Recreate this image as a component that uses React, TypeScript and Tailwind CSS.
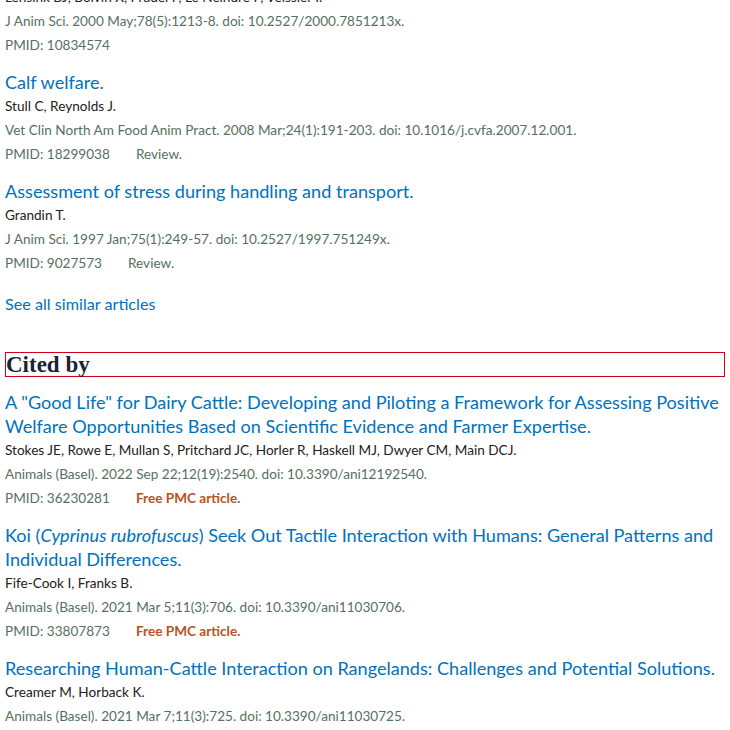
import type { ReactNode } from 'react';

type Article = {
  title: ReactNode;
  authors: string;
  citation: string;
  pmid: string;
  note?: 'review' | 'free';
};

const similar: Article[] = [
  {
    title: 'Calf welfare.',
    authors: 'Stull C, Reynolds J.',
    citation: 'Vet Clin North Am Food Anim Pract. 2008 Mar;24(1):191-203. doi: 10.1016/j.cvfa.2007.12.001.',
    pmid: '18299038',
    note: 'review',
  },
  {
    title: 'Assessment of stress during handling and transport.',
    authors: 'Grandin T.',
    citation: 'J Anim Sci. 1997 Jan;75(1):249-57. doi: 10.2527/1997.751249x.',
    pmid: '9027573',
    note: 'review',
  },
];

const citedBy: Article[] = [
  {
    title:
      'A "Good Life" for Dairy Cattle: Developing and Piloting a Framework for Assessing Positive Welfare Opportunities Based on Scientific Evidence and Farmer Expertise.',
    authors: 'Stokes JE, Rowe E, Mullan S, Pritchard JC, Horler R, Haskell MJ, Dwyer CM, Main DCJ.',
    citation: 'Animals (Basel). 2022 Sep 22;12(19):2540. doi: 10.3390/ani12192540.',
    pmid: '36230281',
    note: 'free',
  },
  {
    title: (
      <>
        Koi (<i>Cyprinus rubrofuscus</i>) Seek Out Tactile Interaction with Humans: General Patterns and Individual
        Differences.
      </>
    ),
    authors: 'Fife-Cook I, Franks B.',
    citation: 'Animals (Basel). 2021 Mar 5;11(3):706. doi: 10.3390/ani11030706.',
    pmid: '33807873',
    note: 'free',
  },
  {
    title: 'Researching Human-Cattle Interaction on Rangelands: Challenges and Potential Solutions.',
    authors: 'Creamer M, Horback K.',
    citation: 'Animals (Basel). 2021 Mar 7;11(3):725. doi: 10.3390/ani11030725.',
    pmid: '',
  },
];

function Docsum({ a }: { a: Article }) {
  return (
    <div className="mb-[13px]">
      <a href="#" className="block text-[18.1px] leading-[24px] text-[#0071bc]">
        {a.title}
      </a>
      <div className="text-[13.6px] leading-[24px] text-[#212121]">{a.authors}</div>
      <div className="text-[13.6px] leading-[24px] text-[#56705f]">{a.citation}</div>
      {a.pmid && (
        <div className="flex text-[13.6px] leading-[24px] text-[#56705f]">
          <span>PMID: {a.pmid}</span>
          {a.note === 'review' && <span className="ml-[26px]">Review.</span>}
          {a.note === 'free' && <span className="ml-[26px] font-bold text-[#b9531c]">Free PMC article.</span>}
        </div>
      )}
    </div>
  );
}

export default function App() {
  return (
    <div className="w-[730px] h-[730px] overflow-hidden bg-white px-[5px] font-['Lato',sans-serif]">
      <div className="-mt-[15px]">
        <div className="text-[13.6px] leading-[24px] text-[#212121]">
          Lensink BJ, Boivin X, Pradel P, Le Neindre P, Veissier I.
        </div>
        <div className="text-[13.6px] leading-[24px] text-[#56705f]">
          J Anim Sci. 2000 May;78(5):1213-8. doi: 10.2527/2000.7851213x.
        </div>
        <div className="text-[13.6px] leading-[24px] text-[#56705f] mb-[13px]">PMID: 10834574</div>

        {similar.map((a, i) => (
          <Docsum key={i} a={a} />
        ))}

        <a href="#" className="block mt-[17px] text-[16.2px] leading-[24px] text-[#0071bc]">
          See all similar articles
        </a>

        <h2 className="mt-[36px] mb-[13px] border border-[#d0021b] h-[25px] flex items-center font-['Liberation_Serif',serif] font-bold text-[23px] leading-none text-[#1b2433]">
          Cited by
        </h2>

        {citedBy.map((a, i) => (
          <Docsum key={i} a={a} />
        ))}
      </div>
    </div>
  );
}
